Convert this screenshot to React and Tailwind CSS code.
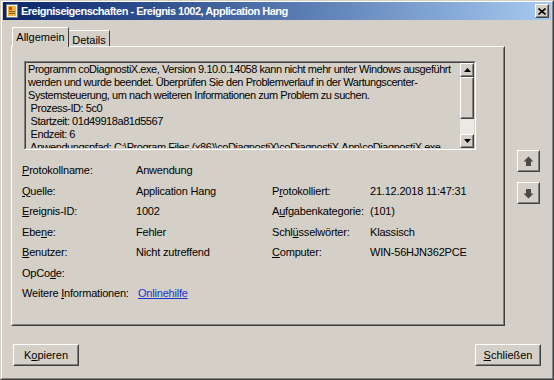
import React from "react";

const Raised = ({ className = "", children }) => (
  <div
    className={`border border-t-white border-l-white border-r-[#404040] border-b-[#404040] bg-[#d4d0c8] ${className}`}
  >
    <div className="flex h-full w-full items-center justify-center border border-t-[#d4d0c8] border-l-[#d4d0c8] border-r-[#808080] border-b-[#808080]">
      {children}
    </div>
  </div>
);

const Tri = ({ down }) => (
  <svg width="7" height="4" viewBox="0 0 7 4">
    <polygon points={down ? "0,0 7,0 3.5,4" : "0,4 7,4 3.5,0"} fill="#000" />
  </svg>
);

const BigArrow = ({ down }) => (
  <svg width="11" height="11" viewBox="0 0 11 11" className={down ? "rotate-180" : ""}>
    <polygon points="5.5,0.5 10.5,5.5 8,5.5 8,10 3,10 3,5.5 0.5,5.5" fill="#4a4a4a" />
  </svg>
);

const fields = [
  ["Protokollname:", "P", "Anwendung", null, null, null],
  ["Quelle:", "Q", "Application Hang", "Protokolliert:", "r", "21.12.2018 11:47:31"],
  ["Ereignis-ID:", "E", "1002", "Aufgabenkategorie:", "u", "(101)"],
  ["Ebene:", "n", "Fehler", "Schlüsselwörter:", "ü", "Klassisch"],
  ["Benutzer:", "B", "Nicht zutreffend", "Computer:", "C", "WIN-56HJN362PCE"],
  ["OpCode:", "d", "", null, null, null],
];

// underline the access key
const Label = ({ text, k }) => {
  let i = text.indexOf(k);
  if (text === "Ebene:") i = 3;
  if (text === "Protokolliert:") i = 1;
  return (
    <span className="whitespace-nowrap">
      {text.slice(0, i)}
      <u>{text[i]}</u>
      {text.slice(i + 1)}
    </span>
  );
};

const lines = [
  "Programm coDiagnostiX.exe, Version 9.10.0.14058 kann nicht mehr unter Windows ausgeführt",
  "werden und wurde beendet. Überprüfen Sie den Problemverlauf in der Wartungscenter-",
  "Systemsteuerung, um nach weiteren Informationen zum Problem zu suchen.",
  " Prozess-ID: 5c0",
  " Startzeit: 01d49918a81d5567",
  " Endzeit: 6",
  " Anwendungspfad: C:\\Program Files (x86)\\coDiagnostiX\\coDiagnostiX.App\\coDiagnostiX.exe",
];

export default function App() {
  return (
    <div className="h-[380px] w-[554px] border border-t-[#d4d0c8] border-l-[#d4d0c8] border-r-[#404040] border-b-[#404040] bg-[#d4d0c8] font-['Liberation_Sans',Arial,sans-serif] text-[11px] text-black">
      <div className="flex h-full flex-col border border-t-white border-l-white border-r-[#808080] border-b-[#808080] px-px pb-px">
        {/* title bar */}
        <div className="flex h-[18px] items-center bg-linear-to-r from-[#0a246a] to-[#a6caf0] pl-px pr-[2px]">
          <svg width="16" height="16" viewBox="0 0 16 16">
            <rect x="2.5" y="1.5" width="11" height="13" fill="#f4f2ec" stroke="#7a7a7a" />
            <rect x="4" y="3" width="8" height="10" fill="#e9b53c" />
            <rect x="5" y="4" width="3" height="3" fill="#d9421e" />
            <rect x="5" y="8" width="6" height="1" fill="#8a5a10" />
            <rect x="5" y="10" width="6" height="1" fill="#8a5a10" />
          </svg>
          <span className="ml-px flex-1 text-[11px] font-bold tracking-[-0.5px] text-white">
            Ereigniseigenschaften - Ereignis 1002, Application Hang
          </span>
          <Raised className="h-[14px] w-[14px]">
            <svg width="8" height="7" viewBox="0 0 8 7">
              <path d="M0.5 0.5 L7.5 6.5 M7.5 0.5 L0.5 6.5" stroke="#000" strokeWidth="1.6" />
            </svg>
          </Raised>
        </div>

        {/* body */}
        <div className="flex flex-1 flex-col pl-[8px] pt-[7px]">
          <div className="flex">
            <div className="w-[494px]">
              {/* tabs */}
              <div className="relative z-10 flex h-[19px] items-end">
                <div className="-mb-px ml-px flex h-[20px] w-[57px] items-start justify-center border-t border-l border-r border-t-white border-l-white border-r-[#404040] bg-[#d4d0c8] pt-[1px]">
                  Allgemein
                </div>
                <div className="flex h-[16px] w-[41px] items-start justify-center border-t border-r border-t-white border-r-[#404040] pt-[1px]">
                  Details
                </div>
              </div>
              {/* panel */}
              <div className="h-[280px] border border-t-white border-l-white border-r-[#404040] border-b-[#404040]">
                <div className="h-full border border-t-[#d4d0c8] border-l-[#d4d0c8] border-r-[#808080] border-b-[#808080] pt-[13px]">
                  {/* description box */}
                  <div className="ml-[11px] h-[89px] w-[452px] border border-t-[#808080] border-l-[#808080] border-r-white border-b-white">
                    <div className="flex h-full border border-t-[#404040] border-l-[#404040] border-r-[#d4d0c8] border-b-[#d4d0c8]">
                      <div className="flex-1 overflow-hidden pl-[2px] leading-[13px] tracking-[-0.45px]">
                        {lines.map((l, i) => (
                          <div key={i} className="whitespace-pre">
                            {l}
                          </div>
                        ))}
                      </div>
                      <div className="flex w-[14px] flex-col">
                        <Raised className="h-[14px]">
                          <Tri />
                        </Raised>
                        <Raised className="h-[42px]" />
                        <div className="flex-1 bg-[#ebe9e4]" />
                        <Raised className="h-[14px]">
                          <Tri down />
                        </Raised>
                      </div>
                    </div>
                  </div>

                  {/* fields */}
                  <div className="ml-[9px] mt-[10px] grid grid-cols-[114px_136px_98px_1fr] auto-rows-[20.5px] items-center tracking-[-0.2px]">
                    {fields.map(([l1, k1, v1, l2, k2, v2]) => (
                      <React.Fragment key={l1}>
                        <Label text={l1} k={k1} />
                        <span>{v1}</span>
                        {l2 ? <Label text={l2} k={k2} /> : <span />}
                        <span>{v2}</span>
                      </React.Fragment>
                    ))}
                  </div>
                  <div className="ml-[9px] flex h-[20.5px] items-center tracking-[-0.2px]">
                    <span className="w-[116px] whitespace-nowrap">
                      Weitere <u>I</u>nformationen:
                    </span>
                    <span className="text-[#1a33cc] underline">Onlinehilfe</span>
                  </div>
                </div>
              </div>
            </div>

            {/* up / down */}
            <div className="ml-[12px] flex flex-col gap-[10px] pt-[123px]">
              <Raised className="h-[22px] w-[23px]">
                <BigArrow />
              </Raised>
              <Raised className="h-[22px] w-[23px]">
                <BigArrow down />
              </Raised>
            </div>
          </div>

          {/* buttons */}
          <div className="ml-[2px] mr-[10px] mt-[18px] flex justify-between">
            <Raised className="h-[22px] w-[66px]">
              K<u>o</u>pieren
            </Raised>
            <Raised className="h-[22px] w-[66px]">
              <u>S</u>chließen
            </Raised>
          </div>
        </div>
      </div>
    </div>
  );
}
